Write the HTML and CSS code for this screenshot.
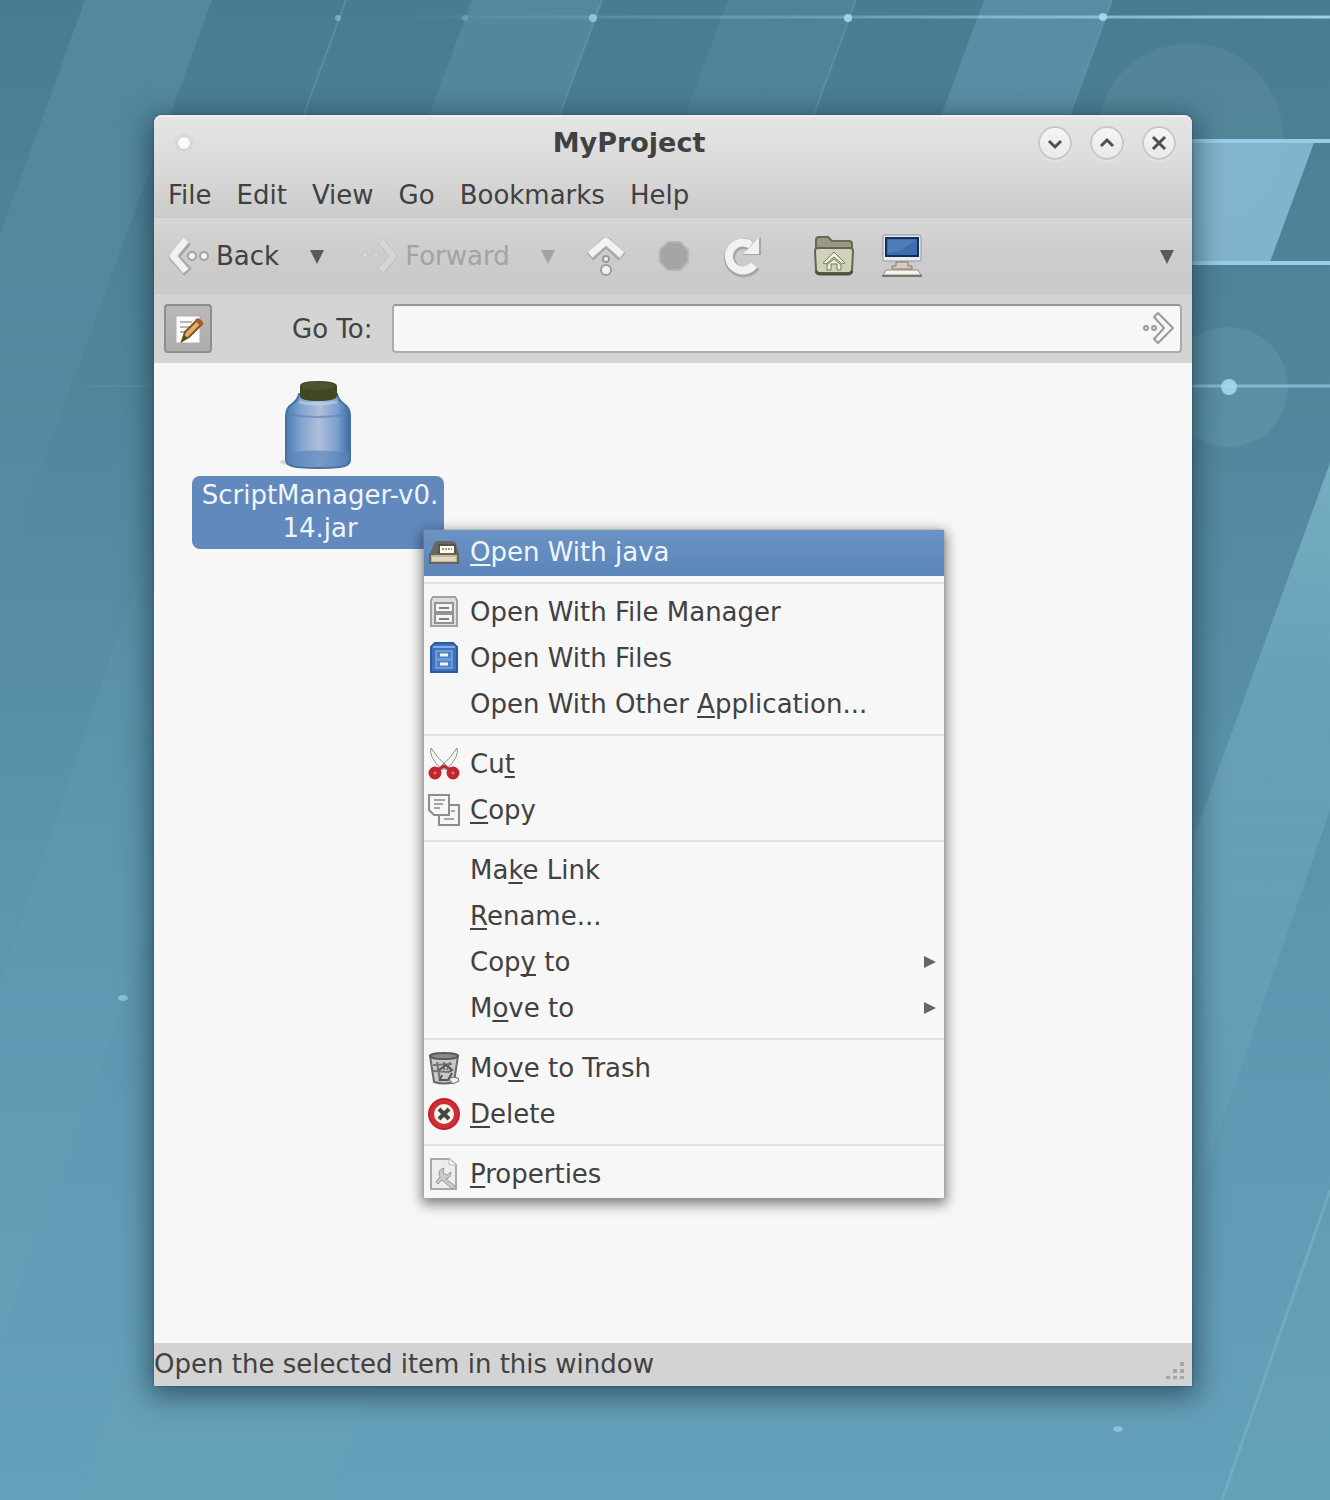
FILE: index.html
```html
<!DOCTYPE html>
<html lang="en">
<head>
<meta charset="utf-8">
<title>MyProject</title>
<link rel="stylesheet" href="styles.css">
</head>
<body>
<svg class="wallpaper" viewBox="0 0 1330 1500" preserveAspectRatio="none" aria-hidden="true">
  <defs>
    <linearGradient id="sky" x1="0" y1="0" x2="0" y2="1">
      <stop offset="0" stop-color="#487c91"/><stop offset=".25" stop-color="#50869c"/><stop offset=".6" stop-color="#5c95ae"/><stop offset="1" stop-color="#65a0ba"/>
    </linearGradient>
    <linearGradient id="bandFade" x1="0" y1="0" x2="0" y2="1">
      <stop offset="0" stop-color="#7fb9d2" stop-opacity=".2"/><stop offset="1" stop-color="#7fb9d2" stop-opacity="0"/>
    </linearGradient>
    <linearGradient id="rayFade" x1="0" y1="0" x2="0" y2="1">
      <stop offset="0" stop-color="#8cc5da" stop-opacity=".6"/><stop offset=".3" stop-color="#8cc5da" stop-opacity=".28"/><stop offset="1" stop-color="#8cc5da" stop-opacity="0"/>
    </linearGradient>
    <linearGradient id="lineFade" gradientUnits="userSpaceOnUse" x1="380" y1="0" x2="1330" y2="0">
      <stop offset="0" stop-color="#a5dcf3" stop-opacity="0"/><stop offset=".5" stop-color="#a5dcf3" stop-opacity=".35"/><stop offset="1" stop-color="#a5dcf3" stop-opacity=".9"/>
    </linearGradient>
  </defs>
  <rect width="1330" height="1500" fill="url(#sky)"/>
  <path d="M85 0H212L0 580V235Z" fill="url(#bandFade)"/>
  <path d="M472 0H602L472 350H342Z" fill="url(#bandFade)"/>
  <path d="M728 0H856L726 350H598Z" fill="url(#bandFade)" opacity=".6"/>
  <path d="M984 0H1112L982 350H854Z" fill="#76afc8" opacity=".35"/>
  <path d="M346 0L300 125M602 0L556 125M856 0L810 125M1112 0L1068 120" stroke="#86bfd3" stroke-width="2" opacity=".25"/>
  <circle cx="1190" cy="136" r="93" fill="#7dacb8" opacity=".15"/>
  <path d="M1150 140H1315L1270 262H1150Z" fill="#8dc1d9" opacity=".8"/>
  <circle cx="1228" cy="387" r="60" fill="#73aabd" opacity=".25"/>
  <path d="M1330 463L1150 957V1330L1330 810Z" fill="url(#rayFade)"/>
  <path d="M1330 1190L1222 1500H1330Z" fill="#74afbf" opacity=".12"/>
  <path d="M1330 1190L1222 1500" stroke="#7db9c8" stroke-width="3" opacity=".5"/>
  <path d="M120 630L0 982V1340L180 850V480Z" fill="#72acc0" opacity=".1"/>
  <path d="M117 1382L77 1500H330L420 1260Z" fill="#72acc0" opacity=".12"/>
  <path d="M380 17H1330" stroke="url(#lineFade)" stroke-width="3"/>
  <path d="M1150 141H1330M1150 263H1330" stroke="#96cee8" stroke-width="4"/>
  <path d="M1150 386H1330" stroke="#80bad2" stroke-width="3"/>
  <path d="M90 386H160" stroke="#80bad2" stroke-width="2" opacity=".12"/>
  <g fill="#a2daf0">
    <circle cx="338" cy="18" r="3" opacity=".5"/><circle cx="465" cy="18" r="3" opacity=".3"/><circle cx="593" cy="18" r="4" opacity=".7"/><circle cx="848" cy="18" r="4" opacity=".9"/><circle cx="1103" cy="17" r="4" opacity=".9"/><circle cx="1229" cy="387" r="8" opacity=".9"/>
    <ellipse cx="123" cy="998" rx="5" ry="3" opacity=".6"/><ellipse cx="1118" cy="1429" rx="5" ry="3" opacity=".6"/>
  </g>
</svg>

<main class="desktop">
  <section class="window" aria-labelledby="window-title">
    <header class="chrome">
      <div class="titlebar">
        <button class="window-menu" type="button" aria-label="Window menu"><span class="dot"></span></button>
        <h1 class="title" id="window-title">MyProject</h1>
        <div class="window-buttons">
          <button class="round" type="button" aria-label="Minimize"><svg viewBox="0 0 34 34"><path d="M11 15l6 6 6-6"/></svg></button>
          <button class="round" type="button" aria-label="Maximize"><svg viewBox="0 0 34 34"><path d="M11 20l6-6 6 6"/></svg></button>
          <button class="round" type="button" aria-label="Close"><svg viewBox="0 0 34 34"><path d="M11 11l12 12M23 11L11 23"/></svg></button>
        </div>
      </div>
      <nav class="menubar">
        <button type="button">File</button>
        <button type="button">Edit</button>
        <button type="button">View</button>
        <button type="button">Go</button>
        <button type="button">Bookmarks</button>
        <button type="button">Help</button>
      </nav>
    </header>

    <div class="toolbar">
      <button class="tool labelled" type="button">
        <svg class="nav-icon" viewBox="0 0 44 44"><g fill="none" stroke-linejoin="round"><path d="M21 7L8 23l14 15" stroke="#a6a6a6" stroke-width="10"/><path d="M20 6L7 22l13 15" stroke="#f2f2f2" stroke-width="7"/></g><g fill="#f2f2f2" stroke="#a2a2a2" stroke-width="2"><circle cx="26" cy="22" r="4"/><circle cx="38" cy="22" r="4"/></g></svg>
        Back
      </button>
      <button class="drop" type="button" aria-label="Back history"><svg viewBox="0 0 28 28"><path d="M7 8h14l-7 14z"/></svg></button>
      <button class="tool labelled" type="button" disabled>
        <svg class="nav-icon" viewBox="0 0 44 44"><g fill="none"><path d="M26 7l12 15-12 16" stroke="#c2c2c2" stroke-width="8"/><path d="M26 7l12 15-12 15" stroke="#d6d6d6" stroke-width="6"/></g><g fill="#d6d6d6" stroke="#c4c4c4" stroke-width="1"><circle cx="10" cy="21" r="3"/><circle cx="21" cy="21" r="3"/></g></svg>
        Forward
      </button>
      <button class="drop" type="button" aria-label="Forward history" disabled><svg viewBox="0 0 28 28"><path d="M7 8h14l-7 14z"/></svg></button>
      <div class="tool-group spaced">
        <button class="tool" type="button" aria-label="Up"><svg viewBox="0 0 40 40"><g fill="none" stroke-linejoin="round"><path d="M4 21L20 6l16 15" stroke="#a9a9a9" stroke-width="10"/><path d="M4 19L20 5l16 14" stroke="#f3f3f3" stroke-width="7"/></g><g fill="#f3f3f3" stroke="#9b9b9b" stroke-width="2"><circle cx="20" cy="23" r="3"/><circle cx="20" cy="34" r="5"/></g></svg></button>
        <button class="tool" type="button" aria-label="Stop" disabled><svg viewBox="0 0 40 40"><path d="M14 6h12l8 8v12l-8 8H14l-8-8V14z" fill="#a5a5a5" stroke="#b4b4b4" stroke-width="2" stroke-linejoin="round"/></svg></button>
        <button class="tool" type="button" aria-label="Reload"><svg viewBox="0 0 40 40"><g fill="none"><path d="M29 10A14 14 0 1 0 33 30" stroke="#a6a6a6" stroke-width="11"/><path d="M39 1v18H20z" fill="#a6a6a6"/><path d="M29 9A14 14 0 1 0 32 29" stroke="#f2f2f2" stroke-width="8"/><path d="M37 2v16H21z" fill="#f2f2f2"/></g></svg></button>
      </div>
      <div class="tool-group">
        <button class="tool" type="button" aria-label="Home"><svg viewBox="0 0 40 40"><path d="M2 32V4q0-3 3-3h9l4 4h17q3 0 3 3v24z" fill="#989885" stroke="#68695b" stroke-width="2"/><path d="M1 15q0-3 3-3h32q3 0 3 3l-1 19q0 3-3 3H5q-3 0-3-3z" fill="#d0d1ba" stroke="#64664d" stroke-width="2"/><path d="M2 35q1 3 4 3h28q3 0 4-3" fill="none" stroke="#515340" stroke-width="3"/><path d="M9 27L20 16l11 11-3 1-8-7-8 7zM13 29l7-6 7 6v5h-4v-6h-6v6h-4z" fill="#eeeedb" stroke="#777a5e" stroke-width="1"/></svg></button>
        <button class="tool" type="button" aria-label="Computer"><svg viewBox="0 0 40 40"><path d="M3-1h34q2 0 2 2v22q0 2-2 2H3q-2 0-2-2V1q0-2 2-2z" fill="#e8edf1" stroke="#8995a1" stroke-width="1"/><path d="M4 2h32v18H4z" fill="#3c6eaf" stroke="#172e52" stroke-width="2"/><path d="M6 4h28L20 14 6 17z" fill="#6592ca" opacity=".4"/><path d="M14 26h12v4h4v3H10v-3h4z" fill="#d9cbbf" stroke="#897465" stroke-width="1"/><path d="M4 34h32l3 5H1z" fill="#f5f5ef" stroke="#8e8e87" stroke-width="1"/><path d="M0 40h40" stroke="#77776f" stroke-width="2"/></svg></button>
      </div>
      <button class="drop last" type="button" aria-label="More tools"><svg viewBox="0 0 28 28"><path d="M7 8h14l-7 14z"/></svg></button>
    </div>

    <form class="location">
      <button class="edit-path" type="button" aria-label="Edit location"><svg viewBox="0 0 32 32"><path d="M4 3h24v27H4z" fill="#fdfdfd" stroke="#b2b0a9" stroke-width="1"/><path d="M8 9h12M8 14h9M8 19h5" stroke="#b6b6b6" stroke-width="2"/><path d="M10 28l3-9L25 7l5 4-13 13z" fill="#e2ad65" stroke="#815120" stroke-width="2"/><path d="M23 7q2-3 5-1l3 3q0 3-3 4z" fill="#a45b33"/><path d="M10 28l2-6 4 3z" fill="#574a32"/></svg></button>
      <label for="path">Go To:</label>
      <div class="entry">
        <input id="path" type="text">
        <button class="go" type="button" aria-label="Go"><svg viewBox="0 0 32 32"><path d="M11 5l4-4 15 15-15 15-4-4 10-11z" fill="#f7f7f7" stroke="#9a9a9a" stroke-width="2" stroke-linejoin="round"/><g fill="none" stroke="#9a9a9a" stroke-width="2"><circle cx="3" cy="16" r="2"/><circle cx="11" cy="16" r="2"/></g></svg></button>
      </div>
    </form>

    <div class="files">
      <button class="file" type="button">
        <svg class="jar" viewBox="0 0 76 94">
          <defs><linearGradient id="glass"><stop offset="0" stop-color="#4d7cb5"/><stop offset=".25" stop-color="#84a5cf"/><stop offset=".52" stop-color="#afbfd8"/><stop offset=".8" stop-color="#7a9fd0"/><stop offset="1" stop-color="#3f6ca5"/></linearGradient></defs>
          <ellipse cx="34" cy="84" rx="34" ry="5" fill="#9faab4" opacity=".4"/>
          <path d="M19 16h38q1 6 7 10 6 4 6 12v44q0 6-10 7-21 2-43 0-11-1-11-7V38q0-8 6-12 6-4 7-10z" fill="url(#glass)" stroke="#4770a3" stroke-width="2"/>
          <path d="M7 74q30-3 62 0v8q-1 5-9 6-22 2-44 0-8-1-9-6z" fill="#5b84bb" opacity=".65"/>
          <path d="M12 37q26 4 52 0" fill="none" stroke="#5681b8" stroke-width="2" opacity=".6"/>
          <path d="M19 24q18 4 38 0" fill="none" stroke="#bfd4ed" stroke-width="3" opacity=".6"/>
          <path d="M20 8q0-5 18-5t19 5v10q-1 5-19 5t-18-5z" fill="#434622"/><ellipse cx="38" cy="8" rx="17" ry="4" fill="#4f5230"/>
        </svg>
        <span class="file-name">ScriptManager-v0.<br>14.jar</span>
      </button>

      <div class="context-menu" role="menu">
        <button class="item active" type="button" role="menuitem"><svg viewBox="0 0 32 32"><path d="M2 18L6 8q1-3 4-3h14q3 0 4 3l3 10z" fill="#69675e"/><path d="M11 9h16v11H11z" fill="#fffdf4" stroke="#56534b" stroke-width="2"/><path d="M14 13h10" stroke="#9a9684" stroke-width="2" stroke-dasharray="2 1"/><path d="M2 18h28v9H2z" fill="#bdbba8" stroke="#68655a" stroke-width="2"/><path d="M4 23h24" stroke="#ded9bf" stroke-width="4"/></svg><span><u>O</u>pen With java</span></button>
        <hr>
        <button class="item" type="button" role="menuitem"><svg viewBox="0 0 32 32"><path d="M5 1h22l2 3v26H3V4z" fill="#dedede" stroke="#a2a2a2" stroke-width="2"/><path d="M7 7h18v9H7zM7 18h18v9H7z" fill="#f6f6f6" stroke="#929292" stroke-width="2"/><path d="M11 12h10M11 23h10" stroke="#808080" stroke-width="2"/></svg><span>Open With File Manager</span></button>
        <button class="item" type="button" role="menuitem"><svg viewBox="0 0 32 32"><path d="M7 1h18l4 4v25H3V5z" fill="#3f72bb" stroke="#2c59a0" stroke-width="2"/><path d="M5 5h22" stroke="#84b0e4" stroke-width="2"/><path d="M8 9h16v8H8zM8 18h16v8H8z" fill="#4c80c7" stroke="#6f9ad2" stroke-width="2"/><path d="M12 13h8M12 22h8" stroke="#f2f7ff" stroke-width="3"/></svg><span>Open With Files</span></button>
        <button class="item" type="button" role="menuitem"><i class="no-icon"></i><span>Open With Other <u>A</u>pplication...</span></button>
        <hr>
        <button class="item" type="button" role="menuitem"><svg viewBox="0 0 32 32"><path d="M3 0Q0 8 14 22l5-4Q9 10 3 0zM29 0q3 8-11 22l-5-4Q23 10 29 0z" fill="#f4f4f2" stroke="#90908e" stroke-width="1"/><g fill="#dc7775" stroke="#c2262d" stroke-width="5"><ellipse cx="7" cy="25" rx="4" ry="4"/><ellipse cx="25" cy="25" rx="4" ry="4"/></g><path d="M11 21l5-3 5 3" fill="none" stroke="#c2262d" stroke-width="3"/></svg><span>Cu<u>t</u></span></button>
        <button class="item" type="button" role="menuitem"><svg viewBox="0 0 32 32"><g fill="#f6f6f6" stroke="#8c8c8c" stroke-width="2"><path d="M11 11h20v20H11z"/><path d="M1 1h20v20H6l-5-5z"/></g><path d="M6 6h11M6 10h9M6 14h6M23 17h4M16 25h10" stroke="#a4a4a4" stroke-width="2"/></svg><span><u>C</u>opy</span></button>
        <hr>
        <button class="item" type="button" role="menuitem"><i class="no-icon"></i><span>Ma<u>k</u>e Link</span></button>
        <button class="item" type="button" role="menuitem"><i class="no-icon"></i><span><u>R</u>ename...</span></button>
        <button class="item submenu" type="button" role="menuitem"><i class="no-icon"></i><span>Cop<u>y</u> to</span></button>
        <button class="item submenu" type="button" role="menuitem"><i class="no-icon"></i><span>M<u>o</u>ve to</span></button>
        <hr>
        <button class="item" type="button" role="menuitem"><svg viewBox="0 0 32 32"><path d="M2 4h28l-4 26q-10 3-20 0z" fill="#c9c9c7" stroke="#6a6a68" stroke-width="2"/><ellipse cx="16" cy="4" rx="14" ry="3" fill="#8b8b89" stroke="#5c5c5a" stroke-width="2"/><path d="M5 13l19-1M5 19l16 1M9 10l3 19M16 10v8M22 10l-3 8" stroke="#747472" stroke-width="2"/><path d="M11 18l7-5 6 5-3 2M24 21l-4 7h-8l2-5" fill="none" stroke="#555553" stroke-width="2"/><path d="M21 27l4-2 5 1 1 3-6 3z" fill="#eee" stroke="#666" stroke-width="1"/></svg><span>Mo<u>v</u>e to Trash</span></button>
        <button class="item" type="button" role="menuitem"><svg viewBox="0 0 32 32"><circle cx="16" cy="16" r="13" fill="#f7f5ee" stroke="#d22d33" stroke-width="6"/><circle cx="16" cy="16" r="15" fill="none" stroke="#aa2026" stroke-width="1"/><path d="M11 11l10 10M21 11L11 21" stroke="#454942" stroke-width="4"/></svg><span><u>D</u>elete</span></button>
        <hr>
        <button class="item" type="button" role="menuitem"><svg viewBox="0 0 32 32"><path d="M3 1h18l7 6v24H3z" fill="#ededed" stroke="#a8a8a8" stroke-width="2"/><path d="M21 1v6h7" fill="#fff" stroke="#bbb" stroke-width="1"/><path d="M11 16q0-5 5-6l-1 5 4 2 4-3q0 6-5 7l9 7-3 3-10-9-4 4-2-2 4-5z" fill="#cacaca" stroke="#989898" stroke-width="1"/></svg><span><u>P</u>roperties</span></button>
      </div>
    </div>

    <footer class="status">
      <span>Open the selected item in this window</span>
      <svg class="grip" viewBox="0 0 20 20" aria-hidden="true"><path d="M1 16h4v3H1zM8 16h4v3H8zM15 16h4v3h-4zM8 9h4v4H8zM15 9h4v4h-4zM15 2h4v4h-4z" fill="#a7a7a7"/></svg>
    </footer>
  </section>
</main>
</body>
</html>
```
FILE: styles.css
```css
* {
  box-sizing: border-box;
}

body {
  margin: 0;
  background: #568da4;
  color: #414141;
  font: 26px/32px "DejaVu Sans", sans-serif;
}

button,
input {
  margin: 0;
  padding: 0;
  border: 0;
  background: none;
  color: inherit;
  font: inherit;
}

svg {
  display: block;
  flex: none;
  overflow: visible;
}

.wallpaper {
  position: absolute;
  inset: 0;
  width: 100%;
  height: 100%;
  overflow: hidden;
}

.desktop {
  position: relative;
  display: flex;
  min-height: 100vh;
  padding: 115px 138px 114px 154px;
}

.window {
  flex: 1;
  display: flex;
  flex-direction: column;
  border-radius: 8px 8px 0 0;
  background: #d4d4d4;
  box-shadow: 0 0 2px rgba(30, 50, 70, .7), 0 6px 28px 4px rgba(25, 50, 65, .65);
}

.chrome {
  border-top: 2px solid #f0f0f0;
  border-bottom: 1px solid #c6c6c6;
  border-radius: 8px 8px 0 0;
  background: linear-gradient(#e5e5e5, #dadada 50%, #cbcbcb);
}

.titlebar {
  display: flex;
  align-items: center;
  height: 54px;
  padding: 0 16px 2px 14px;
}

.window-menu {
  display: grid;
  place-items: center;
  width: 32px;
  height: 32px;
  margin-right: 20px;
}

.dot {
  width: 12px;
  height: 12px;
  border-radius: 50%;
  background: #fafafa;
  box-shadow: 0 0 3px 2px rgba(150, 150, 150, .2);
}

.title {
  flex: 1;
  margin: 0;
  text-align: center;
  font-size: 27px;
  line-height: 32px;
}

.window-buttons {
  display: flex;
  gap: 18px;
}

.round {
  width: 34px;
  height: 34px;
  border-radius: 50%;
  background: linear-gradient(#f6f6f6, #e8e8e8);
  box-shadow: inset 0 0 0 2px #c8c8c8, 0 2px 2px #e4e4e4;
}

.round path {
  fill: none;
  stroke: #505050;
  stroke-width: 3;
}

.menubar {
  display: flex;
  align-items: center;
  gap: 25px;
  height: 46px;
  padding: 2px 14px 0;
}

.toolbar {
  display: flex;
  align-items: center;
  gap: 24px;
  height: 76px;
  padding: 0 11px 0 12px;
  border-top: 1px solid #d6d6d6;
  border-bottom: 1px solid #c6c6c6;
  background: linear-gradient(#d6d6d6, #cccccc 50%, #cacaca);
}

.labelled {
  display: flex;
  align-items: center;
  gap: 6px;
}

.labelled:disabled {
  color: #a3a3a3;
}

.nav-icon {
  width: 44px;
  height: 44px;
}

.drop {
  width: 28px;
  height: 28px;
  fill: #5a5a5a;
}

.drop:disabled {
  fill: #a3a3a3;
}

.last {
  margin-left: auto;
}

.tool-group {
  display: flex;
  gap: 28px;
}

.spaced {
  padding-right: 28px;
}

.tool-group svg {
  width: 40px;
  height: 40px;
}

.location {
  display: flex;
  align-items: center;
  height: 69px;
  padding: 0 10px;
}

.edit-path {
  display: grid;
  place-items: center;
  width: 48px;
  height: 49px;
  border: 2px solid #8e8e8e;
  border-radius: 4px;
  background: linear-gradient(#b9b9b9, #adadad);
}

.edit-path svg {
  width: 32px;
  height: 32px;
}

.location label {
  margin: 0 20px 0 80px;
}

.entry {
  position: relative;
  flex: 1;
}

.entry input {
  display: block;
  width: 100%;
  height: 49px;
  padding: 0 48px 0 10px;
  border: 2px solid #ababab;
  border-top-color: #969696;
  border-radius: 4px;
  background: #f7f7f7;
}

.go {
  position: absolute;
  top: 8px;
  right: 7px;
  width: 32px;
  height: 32px;
}

.files {
  position: relative;
  flex: 1;
  min-height: 860px;
  padding: 15px 38px;
  background: #f7f7f7;
}

.file {
  display: flex;
  flex-direction: column;
  align-items: center;
  gap: 4px;
}

.jar {
  width: 76px;
  height: 94px;
}

.file-name {
  width: 252px;
  padding: 3px 2px 4px 6px;
  border-radius: 8px;
  background: #6189bd;
  color: #f0f5fc;
  line-height: 33px;
}

.context-menu {
  position: absolute;
  top: 167px;
  left: 270px;
  width: 520px;
  background: #f7f7f7;
  box-shadow: 0 0 2px #999, 0 4px 12px 2px rgba(0, 0, 0, .5);
}

.context-menu hr {
  height: 2px;
  margin: 6px 0;
  border: 0;
  background: #e2e2e2;
}

.item {
  display: flex;
  align-items: center;
  gap: 10px;
  width: 100%;
  height: 46px;
  padding: 0 8px 2px 4px;
  text-align: left;
}

.item svg,
.no-icon {
  width: 32px;
  height: 32px;
}

.item u {
  text-decoration-thickness: 2px;
  text-underline-offset: 3px;
  text-decoration-skip-ink: none;
}

.active {
  background: linear-gradient(#6b93c4, #5b84b9);
  color: #f0f5fc;
}

.submenu::after {
  content: "";
  margin-left: auto;
  border: solid transparent;
  border-width: 6px 0 6px 12px;
  border-left-color: #666;
}

.status {
  display: flex;
  align-items: center;
  justify-content: space-between;
  height: 43px;
  padding: 0 7px 2px 0;
  background: #d3d3d3;
}

.grip {
  width: 20px;
  height: 20px;
  align-self: flex-end;
  margin-bottom: 4px;
}
```
